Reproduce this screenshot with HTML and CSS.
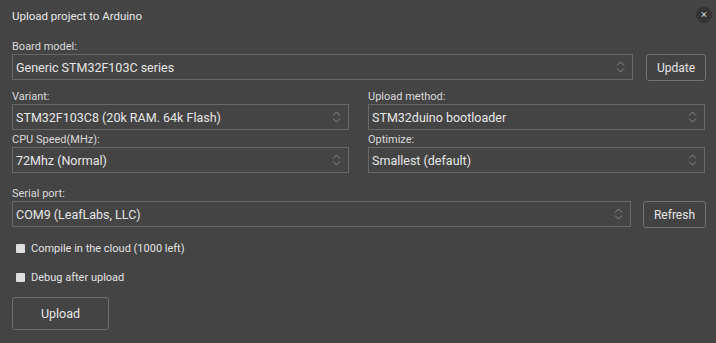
FILE: index.html
```html
<!DOCTYPE html>
<html>
<head>
    <meta charset="utf-8">
    <link rel="stylesheet" href="styles.css">
</head>
<body>
    <div class="dialog">
        <div class="dlg-head">
            <span class="dlg-title">Upload project to Arduino</span>
            <span class="dlg-close">×</span>
        </div>

        <div class="field field-board">
            <div class="field-label">Board model:</div>
            <div class="field-row">
                <div class="pick">
                    <span class="pick-value">Generic STM32F103C series</span>
                    <svg class="pick-arrows" width="9" height="14" viewBox="0 0 9 14"><path d="M1 5.5 L4.5 2 L8 5.5 M1 8.5 L4.5 12 L8 8.5" fill="none" stroke="#8a8a8a" stroke-width="1"/></svg>
                </div>
                <button class="btn btn-side btn-update">Update</button>
            </div>
        </div>

        <div class="opts">
            <div class="field">
                <div class="field-label">Variant:</div>
                <div class="pick">
                    <span class="pick-value">STM32F103C8 (20k RAM. 64k Flash)</span>
                    <svg class="pick-arrows" width="9" height="14" viewBox="0 0 9 14"><path d="M1 5.5 L4.5 2 L8 5.5 M1 8.5 L4.5 12 L8 8.5" fill="none" stroke="#8a8a8a" stroke-width="1"/></svg>
                </div>
            </div>
            <div class="field">
                <div class="field-label">Upload method:</div>
                <div class="pick">
                    <span class="pick-value">STM32duino bootloader</span>
                    <svg class="pick-arrows" width="9" height="14" viewBox="0 0 9 14"><path d="M1 5.5 L4.5 2 L8 5.5 M1 8.5 L4.5 12 L8 8.5" fill="none" stroke="#8a8a8a" stroke-width="1"/></svg>
                </div>
            </div>
            <div class="field">
                <div class="field-label">CPU Speed(MHz):</div>
                <div class="pick">
                    <span class="pick-value">72Mhz (Normal)</span>
                    <svg class="pick-arrows" width="9" height="14" viewBox="0 0 9 14"><path d="M1 5.5 L4.5 2 L8 5.5 M1 8.5 L4.5 12 L8 8.5" fill="none" stroke="#8a8a8a" stroke-width="1"/></svg>
                </div>
            </div>
            <div class="field">
                <div class="field-label">Optimize:</div>
                <div class="pick">
                    <span class="pick-value">Smallest (default)</span>
                    <svg class="pick-arrows" width="9" height="14" viewBox="0 0 9 14"><path d="M1 5.5 L4.5 2 L8 5.5 M1 8.5 L4.5 12 L8 8.5" fill="none" stroke="#8a8a8a" stroke-width="1"/></svg>
                </div>
            </div>
        </div>

        <div class="field field-port">
            <div class="field-label">Serial port:</div>
            <div class="field-row">
                <div class="pick">
                    <span class="pick-value">COM9 (LeafLabs, LLC)</span>
                    <svg class="pick-arrows" width="9" height="14" viewBox="0 0 9 14"><path d="M1 5.5 L4.5 2 L8 5.5 M1 8.5 L4.5 12 L8 8.5" fill="none" stroke="#8a8a8a" stroke-width="1"/></svg>
                </div>
                <button class="btn btn-side btn-refresh">Refresh</button>
            </div>
        </div>

        <label class="check check-cloud"><span class="check-box"></span>Compile in the cloud (1000 left)</label>
        <label class="check"><span class="check-box"></span>Debug after upload</label>

        <button class="btn btn-upload">Upload</button>
    </div>
</body>
</html>
```

FILE: styles.css
```css
html, body {
    margin: 0;
    background: #444444;
}
body {
    font-family: Roboto, "Liberation Sans", sans-serif;
    color: #e2e2e2;
}
.dialog {
    padding: 7px 11px 0 12px;
    display: flex;
    flex-direction: column;
    align-items: stretch;
}
.dlg-head {
    display: flex;
    justify-content: space-between;
    align-items: center;
    height: 18px;
}
.dlg-title {
    font-size: 11.5px;
    color: #e6e6e6;
}
.dlg-close {
    width: 16px;
    height: 16px;
    border-radius: 50%;
    background: #333333;
    color: #cfcfcf;
    font-size: 11px;
    line-height: 15px;
    text-align: center;
    margin-right: -7px;
    margin-top: -3px;
}
.field-label {
    font-size: 11px;
    line-height: 14px;
    color: #dadada;
}
.field-board {
    margin-top: 15px;
}
.field-row {
    display: flex;
    gap: 13px;
}
.field-port {
    margin-top: 14px;
}
.field-port .field-row {
    gap: 12px;
}
.pick {
    flex: 1;
    height: 26px;
    box-sizing: border-box;
    border: 1px solid #686868;
    display: flex;
    align-items: center;
    justify-content: space-between;
    padding: 0 7px 0 3px;
}
.pick-value {
    font-size: 12.5px;
    color: #e6e6e6;
}
.opts {
    margin-top: 9px;
    display: grid;
    grid-template-columns: 1fr 1fr;
    column-gap: 19px;
    row-gap: 3px;
}
.btn {
    font-family: inherit;
    background: #424242;
    color: #e6e6e6;
    border: 1px solid #727272;
    border-radius: 3px;
    font-size: 12px;
    padding: 0;
    box-sizing: border-box;
}
.btn-side {
    height: 27px;
    margin-right: -1px;
}
.btn-update {
    width: 60px;
}
.btn-refresh {
    width: 63px;
}
.check {
    display: flex;
    align-items: center;
    gap: 6px;
    font-size: 11px;
    height: 14px;
    margin-top: 15px;
    padding-left: 4px;
    color: #e2e2e2;
}
.check-cloud {
    margin-top: 13px;
}
.check-box {
    width: 9px;
    height: 9px;
    background: #dedede;
    border-radius: 1px;
}
.btn-upload {
    margin-top: 13px;
    width: 97px;
    height: 33px;
    align-self: flex-start;
    background: #444444;
    border-color: #6e6e6e;
    font-size: 12.5px;
}
```
